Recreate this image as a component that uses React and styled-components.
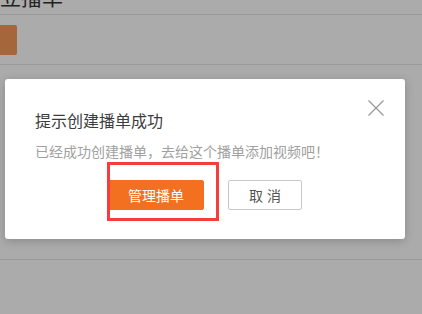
import React from "react";
import styled, { createGlobalStyle } from "styled-components";

const GlobalStyle = createGlobalStyle`
  html, body { margin: 0; padding: 0; }
  body {
    width: 422px;
    height: 314px;
    overflow: hidden;
    background: #fff;
    font-family: "Noto Sans CJK SC", "Noto Sans", sans-serif;
  }
  #root { position: relative; width: 422px; height: 314px; overflow: hidden; }
`;

const Page = styled.div`
  display: flex;
  flex-direction: column;
  width: 422px;
  height: 314px;
  background: #fff;
`;

const HeaderRow = styled.div`
  height: 14px;
  border-bottom: 1px solid #e6e6e6;
  overflow: hidden;
  position: relative;
`;

const PageTitle = styled.h1`
  margin: -16px 0 0 -21px;
  font-size: 21px;
  line-height: 24px;
  font-weight: 400;
  color: #333;
  white-space: nowrap;
`;

const ToolbarRow = styled.div`
  height: 50px;
  display: flex;
  align-items: flex-start;
  padding-top: 10px;
  box-sizing: border-box;
  border-bottom: 1px solid #e6e6e6;
`;

const CreateButton = styled.div`
  width: 17px;
  height: 30px;
  background: #f69858;
  border-radius: 0 2px 2px 0;
`;

const ContentArea = styled.div`
  height: 194px;
  border-bottom: 1px solid #e6e6e6;
  display: flex;
  align-items: center;
`;

const Overlay = styled.div`
  position: absolute;
  inset: 0;
  background: rgba(0, 0, 0, 0.33);
`;

const Dialog = styled.div`
  position: absolute;
  left: 5px;
  top: 79px;
  width: 400px;
  height: 160px;
  box-sizing: border-box;
  padding: 30px 30px 0;
  background: #fff;
  border-radius: 3px;
  box-shadow: 0 2px 10px rgba(0, 0, 0, 0.2);
  display: flex;
  flex-direction: column;
`;

const CloseButton = styled.button`
  position: absolute;
  top: 21px;
  right: 21px;
  width: 16px;
  height: 16px;
  padding: 0;
  border: 0;
  background: none;
  display: flex;
`;

const Title = styled.div`
  font-size: 16px;
  line-height: 22px;
  color: #3c3c3c;
`;

const Message = styled.div`
  margin-top: 10px;
  font-size: 14px;
  line-height: 20px;
  color: #a0a0a0;
`;

const Actions = styled.div`
  margin-top: 19px;
  margin-left: -30px;
  margin-right: -30px;
  display: flex;
  justify-content: center;
  gap: 24px;
`;

const Button = styled.button`
  height: 30px;
  width: ${(p) => (p.$primary ? "96px" : "74px")};
  box-sizing: border-box;
  border-radius: 2px;
  font-family: "Noto Sans CJK SC", "Noto Sans", sans-serif;
  font-size: 14px;
  padding: 0;
  cursor: pointer;
  border: 1px solid ${(p) => (p.$primary ? "#f37021" : "#c8c8c8")};
  background: ${(p) => (p.$primary ? "#f37021" : "#fff")};
  color: ${(p) => (p.$primary ? "#fff" : "#555")};
  letter-spacing: ${(p) => (p.$primary ? "0" : "4px")};
  text-indent: ${(p) => (p.$primary ? "0" : "4px")};
`;

const Highlight = styled.div`
  position: absolute;
  left: 107px;
  top: 162px;
  width: 112px;
  height: 59px;
  box-sizing: border-box;
  border: 3px solid #f53d3d;
  pointer-events: none;
`;

export default function App() {
  return (
    <>
      <GlobalStyle />
      <Page>
        <HeaderRow>
          <PageTitle>建立播单</PageTitle>
        </HeaderRow>
        <ToolbarRow>
          <CreateButton />
        </ToolbarRow>
        <ContentArea />
      </Page>
      <Overlay />
      <Dialog>
        <CloseButton aria-label="关闭">
          <svg width="16" height="16" viewBox="0 0 16 16">
            <path d="M0.5 0.5 L15.5 15.5 M15.5 0.5 L0.5 15.5" stroke="#999" strokeWidth="1.3" fill="none" />
          </svg>
        </CloseButton>
        <Title>提示创建播单成功</Title>
        <Message>已经成功创建播单，去给这个播单添加视频吧！</Message>
        <Actions>
          <Button $primary>管理播单</Button>
          <Button>取消</Button>
        </Actions>
      </Dialog>
      <Highlight />
    </>
  );
}
